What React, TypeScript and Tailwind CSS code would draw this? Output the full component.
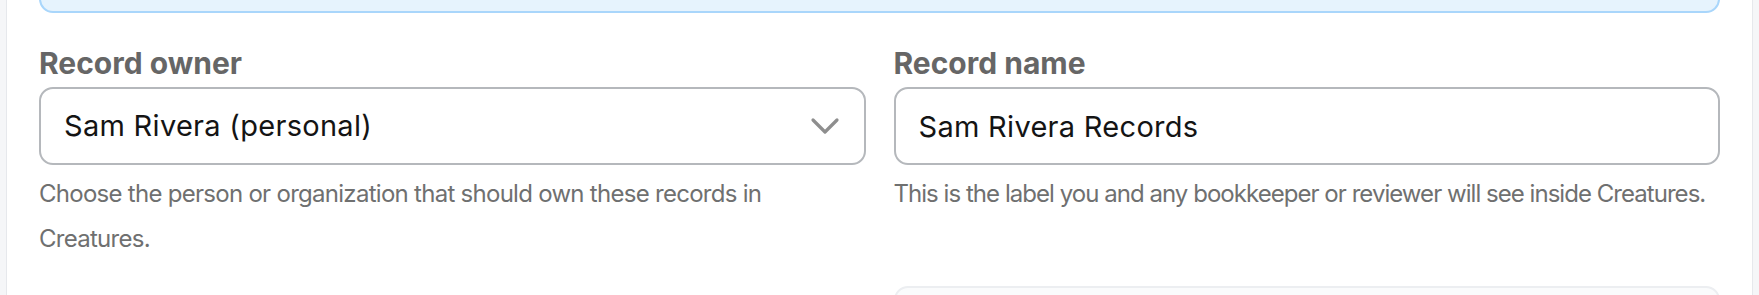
export default function App() {
  return (
    <div className="min-h-screen overflow-hidden bg-[#f5f6f8] px-[6px] font-['Inter',sans-serif]">
      <div className="-mt-[60px] min-h-[400px] border-x border-[#e6e8ec] bg-white px-[32px]">
        {/* info banner, only its bottom edge shows */}
        <div className="h-[73px] rounded-[14px] border-2 border-[#a9d6fb] bg-[#e6f3fd]" />

        <div className="mt-[32px] grid grid-cols-2 gap-x-[28px] gap-y-[25px]">
          <div>
            <label className="block text-[30px] leading-[36px] font-bold text-[#666666]">
              Record owner
            </label>
            <div className="mt-[6px] flex h-[78px] items-center justify-between rounded-[14px] border-2 border-[#b5b8bc] bg-white pl-[23px] pr-[24px]">
              <span className="text-[29px] tracking-[0.01em] text-[#141414]">Sam Rivera (personal)</span>
              <svg width="30" height="18" viewBox="0 0 30 18" fill="none" className="text-[#8e8e8e]">
                <path d="M3 3l12 12L27 3" stroke="currentColor" strokeWidth="3.2" strokeLinecap="round" strokeLinejoin="round" />
              </svg>
            </div>
            <p className="mt-[6px] text-[24px] leading-[45px] tracking-[-0.03em] text-[#6f7070]">
              Choose the person or organization that should own these records in Creatures.
            </p>
          </div>

          <div>
            <label className="block text-[30px] leading-[36px] font-bold text-[#666666]">
              Record name
            </label>
            <input
              type="text"
              defaultValue="Sam Rivera Records"
              className="mt-[6px] block h-[78px] w-full rounded-[14px] border-2 border-[#b5b8bc] bg-white px-[23px] text-[29px] tracking-[0.01em] text-[#141414] outline-none"
            />
            <p className="mt-[6px] whitespace-nowrap text-[24px] leading-[45px] tracking-[-0.04em] text-[#6f7070]">
              This is the label you and any bookkeeper or reviewer will see inside Creatures.
            </p>
          </div>

          <div />
          <div className="h-[78px] rounded-[14px] border-2 border-[#eceef1] bg-[#fafbfc]" />
        </div>
      </div>
    </div>
  )
}
